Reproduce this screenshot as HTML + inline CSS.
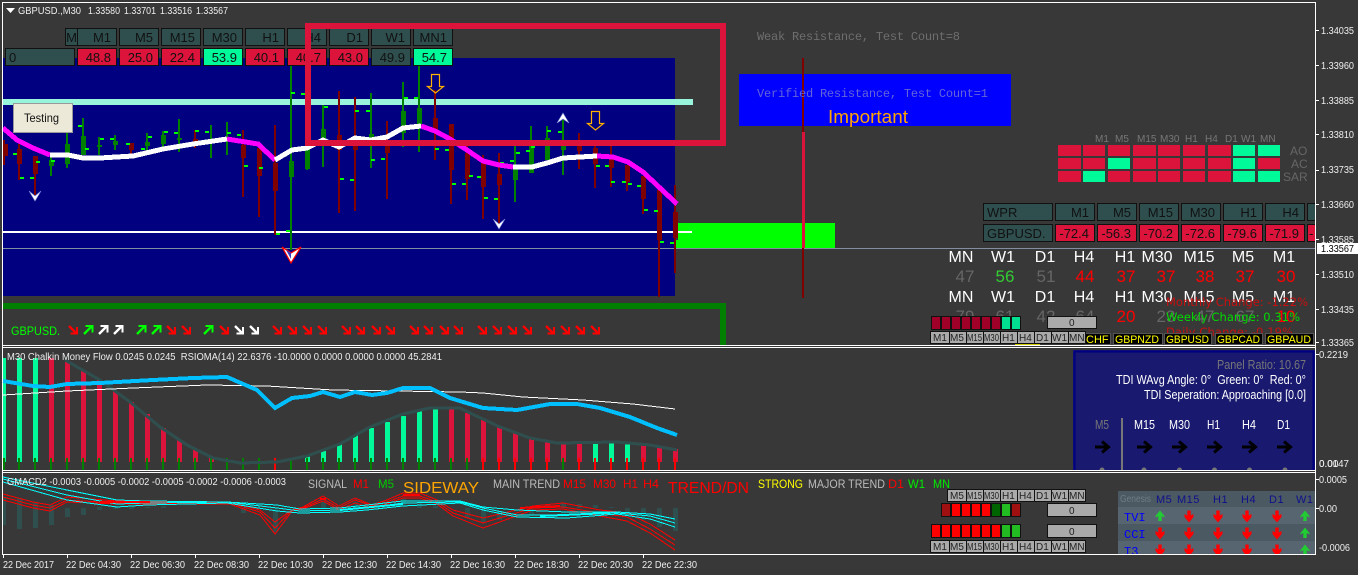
<!DOCTYPE html>
<html><head><meta charset="utf-8"><style>
html,body{margin:0;padding:0;background:#383838;width:1358px;height:575px;overflow:hidden}
svg{display:block}
text{font-family:"Liberation Sans",sans-serif;font-size:11px;fill:#e8e8e8;white-space:pre}
.ax{font-size:10px;fill:#eee}
.c{font-size:13px;fill:#111}
.m{font-family:"Liberation Mono",monospace;font-size:12px}
.b{font-size:16px;fill:#fff}
.n{font-size:17px}
.s{font-size:10px;fill:#222}
.g{font-size:10px;fill:#777}
.k{font-size:12px}
.l{font-family:"DejaVu Sans",sans-serif;font-size:11.5px}
.t{font-size:13px;fill:#fff}
</style></head><body>
<svg width="1358" height="575" viewBox="0 0 1358 575" xmlns="http://www.w3.org/2000/svg">
<defs>
<g id="se"><path d="M0 1L7.5 8.5" stroke-width="2.4" fill="none"/><path d="M8 2V8.5H1.5" stroke-width="2" fill="none"/></g>
<g id="ne"><path d="M0 9L7.5 1.5" stroke-width="2.4" fill="none"/><path d="M1.5 1H8.5V7.5" stroke-width="2" fill="none"/></g>
<path id="tdi" d="M-7 0H5M0-5.5L6.5 0L0 5.5" stroke="#000" stroke-width="3" fill="none"/>
<path id="dn" d="M-1.7-6.500H1.700V-1.500L4.500-3V0L0 5.500L-4.500 0V-3L-1.700-1.500Z"/>
<path id="up" d="M0-5.500L4.500 0V1.500L1.700 0V5H-1.700V0L-4.500 1.500V0Z"/>
<clipPath id="gc"><rect x="1118" y="491" width="197" height="63"/></clipPath>
</defs>
<rect width="1358" height="575" fill="#383838"/>
<!-- blue panel -->
<rect x="3" y="58" width="672" height="238" fill="#000080"/>
<rect x="678" y="223" width="157" height="25" fill="#00ff00"/>
<rect x="676" y="240" width="5" height="9" fill="#00ff00"/>
<rect x="739" y="74" width="272" height="52" fill="#0000ff"/>
<g shape-rendering="crispEdges">
<path d="M3 102H693" stroke="#98f5dc" stroke-width="6"/>
<path d="M3 232H692" stroke="#fff" stroke-width="2"/>
<path d="M3 248.5H1315" stroke="#8090a0" stroke-width="1"/>
<!-- wicks -->
<path fill="none" stroke="#800000" stroke-width="2" d="M4 140V165M19 144V180M35 156V195M131 143V155M195 130V148M243 130V197M259 148V217M275 125V235M339 91V213M355 97V211M387 121V199M435 90V160M451 124V204M467 146V200M483 155V219M499 153V224M579 133V169M595 146V188M611 146V187M627 165V191M643 176V214M659 190V297M675 185V273"/>
<path fill="none" stroke="#008000" stroke-width="2" d="M51 157V176M67 133V168M83 118V155M99 137V155M115 135V150M147 133V152M163 131V150M179 119V152M211 125V158M227 122V155M291 66V250M307 105V170M323 105V167M371 93V168M403 82V147M419 66V152M515 146V202M531 126V173M547 126V160M563 120V175"/>
<!-- bodies -->
<path fill="none" stroke="#800000" stroke-width="5" d="M5.500 144V156M19.500 149V164M35.500 156V174M131.500 143V150M195.500 139V143M243.500 145V158M259.500 148V176M275.500 163V191M339.500 135V150M355.500 140V150M387.500 140V153M435.500 118V130M451.500 124V170M467.500 153V179M483.500 163V187M499.500 174V185M579.500 146V151M595.500 148V164M611.500 156V168M627.500 165V182M643.500 176V199M659.500 190V240M675.500 212V238"/>
<path fill="none" stroke="#008000" stroke-width="5" d="M51.500 160V166M67.500 144V164M83.500 136V155M99.500 145V147M115.500 141V145M147.500 142V146M163.500 135V144M179.500 138V140M211.500 140V141M227.500 137V139M291.500 161V177M307.500 147V169M323.500 129V140M371.500 134V140M403.500 111V133M419.500 108V125M515.500 165V180M531.500 146V173M547.500 138V160M563.500 146V150"/>
<!-- fractal dashes -->
<path fill="none" stroke="#00ff00" stroke-width="2" d="M13 154h4M20 178h4M30 178h4M36 162h4M51 161h4M78 126h4M85 149h4M100 139h4M110 139h4M126 144h4M141 149h4M148 137h4M164 132h4M174 133h4M195 131h4M205 132h4M227 133h4M237 135h4M244 166h4M259 168h4M291 93h4M301 94h4M324 107h4M340 179h4M350 180h4M355 111h4M366 111h4M371 160h4M381 159h4M404 98h4M414 98h4M435 149h4M445 150h4M452 184h4M462 184h4M469 176h4M477 177h4M484 198h4M494 199h4M500 163h4M510 161h4M516 153h4M526 151h4M531 147h4M547 131h4M558 132h4M596 166h4M605 166h4M611 182h4M622 182h4M628 184h4M637 186h4M644 210h4M654 211h4M660 242h4M670 243h4M276 234h4M286 231h4"/>
<!-- MA line -->
<path fill="none" stroke="#ff00ff" stroke-width="5" d="M3 128L17 140L33 148L50 155M227 139L258 144L275 160M421 126L435 131L450 139L467 150L483 161L499 165L513 167M597 156L613 157L628 162L643 172L660 188L677 204"/>
<path fill="none" stroke="#fff" stroke-width="5" d="M50 155H68L83 158L100 158L133 156L163 149L193 144L227 139M275 160L292 150L307 148L323 140L339 147L355 138L371 140L387 137L403 128L421 126M513 167L532 167L547 163L563 158L580 157L597 156"/>
<!-- vertical line -->
<path d="M803 58V132M803 248V298" stroke="#800000" stroke-width="2"/>
<path d="M803.500 132V248" stroke="#dc143c" stroke-width="3"/>
<!-- green frame -->
<path d="M3 306H723V345" fill="none" stroke="#007f00" stroke-width="6"/>
</g>
<!-- chevrons -->
<path d="M29 191L35 196L41 191L35 201Z" fill="#fff" stroke="#7c8cd8" stroke-width=".6"/>
<path d="M493 219L499 224L505 219L499 229Z" fill="#fff" stroke="#7c8cd8" stroke-width=".6"/>
<path d="M282 247L291 253L301 247L291 263Z" fill="#fff" stroke="#f00" stroke-width="1.200"/>
<path d="M286 250L291 253V259Z" fill="#3a3ac0"/>
<path d="M557 123L563 119L569 123L563 113Z" fill="#fff" stroke="#7c8cd8" stroke-width=".6"/>
<path d="M431.500 74.500H439.500V86.500H443.500L435.500 93L427.500 86.500H431.500Z" fill="none" stroke="#ffb000" stroke-width="1.200"/>
<path d="M591.500 111.500H599.500V123.500H603.500L595.500 130L587.500 123.500H591.500Z" fill="none" stroke="#ffb000" stroke-width="1.200"/>
<!-- Testing -->
<rect x="13.500" y="103.500" width="59" height="29" fill="#ece9d8" stroke="#999"/>
<text x="24" y="122" style="font-size:12px;fill:#111" textLength="35" lengthAdjust="spacingAndGlyphs">Testing</text>
<!-- header table -->
<g stroke="#111" stroke-width="1" shape-rendering="crispEdges" fill="#2f4f4f">
<rect x="65.500" y="28.500" width="12" height="17"/><rect x="77.500" y="28.500" width="39" height="17"/><rect x="119.500" y="28.500" width="39" height="17"/><rect x="161.500" y="28.500" width="39" height="17"/><rect x="203.500" y="28.500" width="39" height="17"/><rect x="245.500" y="28.500" width="39" height="17"/><rect x="287.500" y="28.500" width="39" height="17"/><rect x="329.500" y="28.500" width="39" height="17"/><rect x="371.500" y="28.500" width="39" height="17"/><rect x="413.500" y="28.500" width="39" height="17"/>
<rect x="5.500" y="48.500" width="69" height="17"/><rect x="371.500" y="48.500" width="39" height="17"/>
<rect x="77.500" y="48.500" width="39" height="17" fill="#dc143c"/><rect x="119.500" y="48.500" width="39" height="17" fill="#dc143c"/><rect x="161.500" y="48.500" width="39" height="17" fill="#dc143c"/><rect x="203.500" y="48.500" width="39" height="17" fill="#00fa9a"/><rect x="245.500" y="48.500" width="39" height="17" fill="#dc143c"/><rect x="287.500" y="48.500" width="39" height="17" fill="#dc143c"/><rect x="329.500" y="48.500" width="39" height="17" fill="#dc143c"/><rect x="413.500" y="48.500" width="39" height="17" fill="#00fa9a"/>
</g>
<g class="c" text-anchor="end">
<text class="c" x="77" y="42">M</text><text class="c" x="111" y="42">M1</text><text class="c" x="153" y="42">M5</text><text class="c" x="195" y="42">M15</text><text class="c" x="237" y="42">M30</text><text class="c" x="279" y="42">H1</text><text class="c" x="321" y="42">H4</text><text class="c" x="363" y="42">D1</text><text class="c" x="405" y="42">W1</text><text class="c" x="447" y="42">MN1</text>
<text class="c" x="111" y="62">48.8</text><text class="c" x="153" y="62">25.0</text><text class="c" x="195" y="62">22.4</text><text class="c" x="237" y="62">53.9</text><text class="c" x="279" y="62">40.1</text><text class="c" x="321" y="62">40.7</text><text class="c" x="363" y="62">43.0</text><text class="c" x="405" y="62">49.9</text><text class="c" x="447" y="62">54.7</text>
</g>
<text class="c" x="9" y="62">0</text>
<!-- crimson rectangle -->
<path d="M308 26H723V143H308Z" fill="none" stroke="#dc143c" stroke-width="6" shape-rendering="crispEdges"/>
<!-- frame title -->
<path d="M6 8H15L10.500 13Z" fill="#fff"/>
<text x="18" y="14" class="ax" textLength="63" lengthAdjust="spacingAndGlyphs">GBPUSD.,M30</text>
<text x="88" y="14" class="ax" textLength="32" lengthAdjust="spacingAndGlyphs">1.33580</text><text x="124" y="14" class="ax" textLength="32" lengthAdjust="spacingAndGlyphs">1.33701</text><text x="160" y="14" class="ax" textLength="32" lengthAdjust="spacingAndGlyphs">1.33516</text><text x="196" y="14" class="ax" textLength="32" lengthAdjust="spacingAndGlyphs">1.33567</text>
<!-- resistance text -->
<text class="m" x="757" y="40" style="fill:#6e6e6e" textLength="203">Weak Resistance, Test Count=8</text>
<text class="m" x="757" y="97" style="fill:#6464d8" textLength="231">Verified Resistance, Test Count=1</text>
<text x="828" y="123" style="font-size:18px;fill:#ffa500" textLength="80" lengthAdjust="spacingAndGlyphs">Important</text>
<!-- signal grid -->
<g shape-rendering="crispEdges" fill="#dc143c">
<path d="M1058 145h23v11h-23zM1083 145h22v11h-22zM1108 145h22v11h-22zM1133 145h23v11h-23zM1158 145h22v11h-22zM1183 145h22v11h-22zM1208 145h23v11h-23zM1058 158h23v11h-23zM1083 158h22v11h-22zM1133 158h23v11h-23zM1158 158h22v11h-22zM1183 158h22v11h-22zM1208 158h23v11h-23zM1258 158h22v11h-22zM1058 171h23v11h-23zM1108 171h22v11h-22zM1133 171h23v11h-23zM1158 171h22v11h-22zM1183 171h22v11h-22zM1208 171h23v11h-23z"/>
<path fill="#00fa9a" d="M1233 145h22v11h-22zM1258 145h22v11h-22zM1108 158h22v11h-22zM1233 158h22v11h-22zM1083 171h22v11h-22zM1233 171h22v11h-22zM1258 171h22v11h-22z"/>
</g>
<g class="g">
<text class="g" x="1095" y="142">M1</text><text class="g" x="1115" y="142">M5</text><text class="g" x="1137" y="142">M15</text><text class="g" x="1160" y="142">M30</text><text class="g" x="1185" y="142">H1</text><text class="g" x="1205" y="142">H4</text><text class="g" x="1225" y="142">D1</text><text class="g" x="1241" y="142">W1</text><text class="g" x="1260" y="142">MN</text>
</g>
<text x="1290" y="155" style="font-size:12px;fill:#666">AO</text><text x="1291" y="168" style="font-size:12px;fill:#666">AC</text><text x="1283" y="181" style="font-size:12px;fill:#666">SAR</text>
<!-- WPR table -->
<svg x="0" y="0" width="1315" height="575">
<g stroke="#111" shape-rendering="crispEdges" fill="#2f4f4f">
<rect x="983.500" y="203.500" width="69" height="17"/><rect x="1055.500" y="203.500" width="39" height="17"/><rect x="1097.500" y="203.500" width="39" height="17"/><rect x="1139.500" y="203.500" width="39" height="17"/><rect x="1181.500" y="203.500" width="39" height="17"/><rect x="1223.500" y="203.500" width="39" height="17"/><rect x="1265.500" y="203.500" width="39" height="17"/><rect x="1307.500" y="203.500" width="39" height="17"/>
<rect x="983.500" y="224.500" width="69" height="17"/>
<g fill="#dc143c"><rect x="1055.500" y="224.500" width="39" height="17"/><rect x="1097.500" y="224.500" width="39" height="17"/><rect x="1139.500" y="224.500" width="39" height="17"/><rect x="1181.500" y="224.500" width="39" height="17"/><rect x="1223.500" y="224.500" width="39" height="17"/><rect x="1265.500" y="224.500" width="39" height="17"/><rect x="1307.500" y="224.500" width="39" height="17"/></g>
</g>
<text class="c" x="987" y="217">WPR</text><text class="c" x="987" y="238">GBPUSD.</text>
<g text-anchor="end">
<text class="c" x="1089" y="217">M1</text><text class="c" x="1131" y="217">M5</text><text class="c" x="1173" y="217">M15</text><text class="c" x="1215" y="217">M30</text><text class="c" x="1257" y="217">H1</text><text class="c" x="1299" y="217">H4</text>
<text class="c" x="1089" y="238">-72.4</text><text class="c" x="1131" y="238">-56.3</text><text class="c" x="1173" y="238">-70.2</text><text class="c" x="1215" y="238">-72.6</text><text class="c" x="1257" y="238">-79.6</text><text class="c" x="1299" y="238">-71.9</text>
</g>
<text class="c" x="1309" y="238">-</text>
</svg>
<!-- RSI labels -->
<g text-anchor="middle">
<text class="b" x="961" y="262">MN</text><text class="b" x="1003" y="262">W1</text><text class="b" x="1045" y="262">D1</text><text class="b" x="1084" y="262">H4</text><text class="b" x="1125" y="262">H1</text><text class="b" x="1157" y="262">M30</text><text class="b" x="1199" y="262">M15</text><text class="b" x="1243" y="262">M5</text><text class="b" x="1284" y="262">M1</text>
<text class="n" x="965" y="282" style="fill:#666">47</text><text class="n" x="1005" y="282" style="fill:#33cc33">56</text><text class="n" x="1046" y="282" style="fill:#666">51</text><text class="n" x="1085" y="282" style="fill:#f00">44</text><text class="n" x="1126" y="282" style="fill:#f00">37</text><text class="n" x="1166" y="282" style="fill:#f00">37</text><text class="n" x="1205" y="282" style="fill:#f00">38</text><text class="n" x="1245" y="282" style="fill:#f00">37</text><text class="n" x="1286" y="282" style="fill:#f00">30</text>
<text class="b" x="961" y="302">MN</text><text class="b" x="1003" y="302">W1</text><text class="b" x="1045" y="302">D1</text><text class="b" x="1084" y="302">H4</text><text class="b" x="1125" y="302">H1</text><text class="b" x="1157" y="302">M30</text><text class="b" x="1199" y="302">M15</text><text class="b" x="1243" y="302">M5</text><text class="b" x="1284" y="302">M1</text>
<text class="n" x="965" y="322" style="fill:#666">79</text><text class="n" x="1005" y="322" style="fill:#666">61</text><text class="n" x="1046" y="322" style="fill:#666">42</text><text class="n" x="1085" y="322" style="fill:#666">64</text><text class="n" x="1126" y="322" style="fill:#f00">20</text><text class="n" x="1166" y="322" style="fill:#666">23</text><text class="n" x="1205" y="322" style="fill:#666">47</text><text class="n" x="1245" y="322" style="fill:#666">67</text><text class="n" x="1286" y="322" style="fill:#f00">10</text>
</g>
<text class="l" x="1166" y="306" style="fill:#c81010" textLength="142">Monthly Change: -1.22%</text>
<text class="l" x="1166" y="321" style="fill:#00dd00" textLength="134">Weekly Change: 0.31%</text>
<text class="l" x="1166" y="336" style="fill:#c81010" textLength="127">Daily Change: -0.19%</text>
<!-- pair boxes -->
<g shape-rendering="crispEdges"><path fill="#000" stroke="#555" d="M1085.500 333.500h25v11h-25zM1113.500 333.500h49v11h-49zM1164.500 333.500h47v11h-47zM1215.500 333.500h47v11h-47zM1265.500 333.500h48v11h-48z"/></g>
<g style="font-size:11px"><text x="1086" y="343" style="fill:#ff0">CHF</text><text x="1115" y="343" style="fill:#ff0" textLength="44" lengthAdjust="spacingAndGlyphs">GBPNZD</text><text x="1166" y="343" style="fill:#ff0" textLength="43" lengthAdjust="spacingAndGlyphs">GBPUSD</text><text x="1217" y="343" style="fill:#ff0" textLength="43" lengthAdjust="spacingAndGlyphs">GBPCAD</text><text x="1267" y="343" style="fill:#ff0" textLength="44" lengthAdjust="spacingAndGlyphs">GBPAUD</text></g>
<rect x="1015" y="344" width="25" height="2" fill="#cc0"/>
<!-- bars 1 -->
<g shape-rendering="crispEdges" stroke="#111">
<path fill="#a00028" d="M931.500 316.500h9v13h-9zM941.500 316.500h9v13h-9zM951.500 316.500h9v13h-9zM961.500 316.500h9v13h-9zM971.500 316.500h9v13h-9zM981.500 316.500h9v13h-9zM991.500 316.500h9v13h-9z"/>
<path fill="#00e090" d="M1001.500 316.500h9v13h-9zM1011.500 316.500h9v13h-9z"/>
<rect x="1047.500" y="316.500" width="49" height="12" fill="#aaa"/>
<path fill="#aaa" d="M930.500 331.500h19v12h-19zM949.500 331.500h17v12h-17zM966.500 331.500h17v12h-17zM983.500 331.500h17v12h-17zM1000.500 331.500h17v12h-17zM1017.500 331.500h17v12h-17zM1034.500 331.500h17v12h-17zM1051.500 331.500h17v12h-17zM1068.500 331.500h17v12h-17z"/>
</g>
<text class="s" x="1069" y="326">0</text>
<g><text class="s" x="933" y="341">M1</text><text class="s" x="950" y="341">M5</text><text class="s" x="967" y="341" textLength="15" lengthAdjust="spacingAndGlyphs">M15</text><text class="s" x="984" y="341" textLength="15" lengthAdjust="spacingAndGlyphs">M30</text><text class="s" x="1002" y="341">H1</text><text class="s" x="1019" y="341">H4</text><text class="s" x="1036" y="341">D1</text><text class="s" x="1052" y="341">W1</text><text class="s" x="1069" y="341">MN</text></g>
<!-- arrows row -->
<text x="11" y="335" style="font-size:12px;fill:#00ff00" textLength="49" lengthAdjust="spacingAndGlyphs">GBPUSD.</text>
<g stroke="#f00">
<use href="#se" x="69" y="325"/><use href="#se" x="167" y="325"/><use href="#se" x="182" y="325"/><use href="#se" x="220" y="325"/><use href="#se" x="273" y="325"/><use href="#se" x="288" y="325"/><use href="#se" x="303" y="325"/><use href="#se" x="318" y="325"/><use href="#se" x="342" y="325"/><use href="#se" x="356" y="325"/><use href="#se" x="372" y="325"/><use href="#se" x="386" y="325"/><use href="#se" x="410" y="325"/><use href="#se" x="424" y="325"/><use href="#se" x="440" y="325"/><use href="#se" x="454" y="325"/><use href="#se" x="478" y="325"/><use href="#se" x="493" y="325"/><use href="#se" x="508" y="325"/><use href="#se" x="523" y="325"/><use href="#se" x="546" y="325"/><use href="#se" x="561" y="325"/><use href="#se" x="576" y="325"/><use href="#se" x="591" y="325"/>
</g>
<g stroke="#0f0"><use href="#ne" x="84" y="325"/><use href="#ne" x="137" y="325"/><use href="#ne" x="152" y="325"/><use href="#ne" x="204" y="325"/></g>
<g stroke="#fff"><use href="#ne" x="99" y="325"/><use href="#ne" x="114" y="325"/><use href="#se" x="235" y="325"/><use href="#se" x="250" y="325"/></g>
<!-- frame lines -->
<g shape-rendering="crispEdges" stroke="#fff" fill="none">
<path d="M2.500 2.500H1315.500V554.500H2.500Z"/>
<path d="M2 345.500H1316M2 347.500H1316M2 470.500H1316M2 472.500H1316"/>
<path d="M1315 30.500h4M1315 65.500h4M1315 100.500h4M1315 134.500h4M1315 170.500h4M1315 204.500h4M1315 239.500h4M1315 274.500h4M1315 309.500h4M1315 342.500h4M1315 354.500h4M1315 508.500h4M1315 479.500h4M3.500 555v3M67.500 555v3M131.500 555v3M195.500 555v3M259.500 555v3M323.500 555v3M387.500 555v3M451.500 555v3M515.500 555v3M579.500 555v3M643.500 555v3"/>
</g>
<!-- axis -->
<g class="ax">
<text class="ax" x="1321" y="34" textLength="33" lengthAdjust="spacingAndGlyphs">1.34035</text><text class="ax" x="1321" y="69" textLength="33" lengthAdjust="spacingAndGlyphs">1.33960</text><text class="ax" x="1321" y="104" textLength="33" lengthAdjust="spacingAndGlyphs">1.33885</text><text class="ax" x="1321" y="138" textLength="33" lengthAdjust="spacingAndGlyphs">1.33810</text><text class="ax" x="1321" y="173" textLength="33" lengthAdjust="spacingAndGlyphs">1.33735</text><text class="ax" x="1321" y="208" textLength="33" lengthAdjust="spacingAndGlyphs">1.33660</text><text class="ax" x="1321" y="243" textLength="33" lengthAdjust="spacingAndGlyphs">1.33585</text><text class="ax" x="1321" y="278" textLength="33" lengthAdjust="spacingAndGlyphs">1.33510</text><text class="ax" x="1321" y="313" textLength="33" lengthAdjust="spacingAndGlyphs">1.33435</text><text class="ax" x="1321" y="346" textLength="33" lengthAdjust="spacingAndGlyphs">1.33365</text>
</g>
<rect x="1317" y="243" width="41" height="11" fill="#fff"/>
<text class="ax" x="1321" y="252" style="fill:#000" textLength="33" lengthAdjust="spacingAndGlyphs">1.33567</text>
<text class="ax" x="1319" y="358" textLength="29" lengthAdjust="spacingAndGlyphs">0.2219</text>
<text class="ax" x="1319" y="467" textLength="30" lengthAdjust="spacingAndGlyphs">0.0147</text><text class="ax" x="1319" y="467">0.00</text>
<text class="ax" x="1319" y="483" textLength="28" lengthAdjust="spacingAndGlyphs">0.0005</text>
<text class="ax" x="1319" y="512" textLength="18" lengthAdjust="spacingAndGlyphs">0.00</text>
<text class="ax" x="1319" y="551" textLength="31" lengthAdjust="spacingAndGlyphs">-0.0006</text>
<!-- panel 2 histogram -->
<g shape-rendering="crispEdges">
<path fill="none" stroke="#00fa9a" stroke-width="3" d="M4.500 358V462"/>
<path fill="none" stroke="#00fa9a" stroke-width="5" d="M19.500 358V462M35.500 358V462M307.500 456V462M323.500 451V462M339.500 444V462M355.500 435V462M371.500 428V462M387.500 422V462M403.500 416V462M419.500 410V462M435.500 409V462M595.500 444V462M611.500 443V462M627.500 443V462"/>
<path fill="none" stroke="#dc143c" stroke-width="5" d="M51.500 358V462M67.500 362V462M83.500 371V462M99.500 380V462M115.500 391V462M131.500 402V462M147.500 414V462M163.500 428V462M179.500 440V462M195.500 450V462M211.500 458V462M243.500 462V463M451.500 409V462M467.500 413V462M483.500 420V462M499.500 427V462M515.500 433V462M531.500 439V462M547.500 442V462M563.500 444V462M579.500 444V462M643.500 445V462M659.500 447V462M675.500 449V462"/>
<path fill="none" stroke="#007f00" stroke-width="2" d="M4 458V470M19 458V470M35 458V470M51 458V470M67 458V470M83 458V470M99 458V470M115 458V470M131 458V470M147 458V470M163 458V470M179 458V470M195 458V470M211 458V470M227 458V470M243 458V470M259 458V470M291 458V470M307 458V470M323 458V470M339 458V470M355 458V470M371 458V470M387 458V470M403 458V470M419 458V470M435 458V470M451 458V470M467 458V470M563 458V470"/>
<path fill="none" stroke="#f00" stroke-width="2" d="M275 458V470M483 458V470M499 458V470M515 458V470M531 458V470M547 458V470M579 458V470M595 458V470M611 458V470M627 458V470M643 458V470M659 458V470M675 458V470"/>
<path fill="none" stroke="#2f4f4f" stroke-width="3" d="M65 360L100 380L130 402L160 427L187 445L213 458L240 463L277 462L307 456L340 444L370 427L403 414L430 408L460 408L470 413L500 427L530 438L557 443L617 442L650 445L677 450"/>
<path fill="none" stroke="#fff" stroke-width="1" d="M3 395L67 391L133 388L207 385L267 386L333 390L460 392L483 393L523 397L583 400L633 404L675 409"/>
<path fill="none" stroke="#00bfff" stroke-width="4" d="M3 381L33 386L50 387L67 384L100 383L153 380L193 378L227 377L257 390L275 408L292 398L310 396L323 392L340 397L355 392L372 395L387 393L403 388L430 388L450 398L483 408L517 410L550 404L577 404L600 408L630 417L657 428L677 435"/>
</g>
<text x="7" y="360" textLength="435" lengthAdjust="spacingAndGlyphs" class="ax">M30 Chalkin Money Flow 0.0245 0.0245  RSIOMA(14) 22.6376 -10.0000 0.0000 0.0000 0.0000 45.2841</text>
<!-- TDI panel -->
<rect x="1073" y="350" width="242" height="120" fill="#191970"/>
<path d="M1074 351.500H1313.500V470M1074.500 351V470" fill="none" stroke="#000080" stroke-width="2"/>
<text x="1217" y="369" style="fill:#777;font-size:13px" textLength="89" lengthAdjust="spacingAndGlyphs">Panel Ratio: 10.67</text>
<text x="1116" y="384" class="t" textLength="190" lengthAdjust="spacingAndGlyphs">TDI WAvg Angle: 0°  Green: 0°  Red: 0°</text>
<text x="1144" y="399" class="t" textLength="162" lengthAdjust="spacingAndGlyphs">TDI Seperation: Approaching [0.0]</text>
<text x="1095" y="429" style="fill:#777;font-size:13px" textLength="14" lengthAdjust="spacingAndGlyphs">M5</text><text x="1134" y="429" class="t" textLength="21" lengthAdjust="spacingAndGlyphs">M15</text><text x="1169" y="429" class="t" textLength="21" lengthAdjust="spacingAndGlyphs">M30</text><text x="1207" y="429" class="t" textLength="13" lengthAdjust="spacingAndGlyphs">H1</text><text x="1242" y="429" class="t" textLength="14" lengthAdjust="spacingAndGlyphs">H4</text><text x="1277" y="429" class="t" textLength="13" lengthAdjust="spacingAndGlyphs">D1</text>
<rect x="1121" y="418" width="2" height="52" fill="#777"/>
<use href="#tdi" x="1102" y="447"/><use href="#tdi" x="1144" y="447"/><use href="#tdi" x="1179" y="447"/><use href="#tdi" x="1214" y="447"/><use href="#tdi" x="1249" y="447"/><use href="#tdi" x="1284" y="447"/>
<g fill="#777"><path d="M1099.500 470a2.500 2.500 0 0 1 5 0zM1141.500 470a2.500 2.500 0 0 1 5 0zM1177 470a2.500 2.500 0 0 1 5 0zM1212 470a2.500 2.500 0 0 1 5 0zM1247 470a2.500 2.500 0 0 1 5 0zM1282.500 470a2.500 2.500 0 0 1 5 0z"/></g>
<!-- panel 3 -->
<g shape-rendering="crispEdges" fill="none">
<path stroke="#2f4f4f" stroke-width="3" d="M4.500 498V525"/>
<path stroke="#2f4f4f" stroke-width="5" d="M19.500 498V529M35.500 502V528M51.500 505V525M67.500 508V517M83.500 508V515M99.500 507V510M115.500 507V509M131.500 507V509M147.500 507V508M163.500 506V508M243.500 508V513M275.500 508V532M323.500 502V508M355.500 502V508M403.500 498V505M419.500 502V508M435.500 506V508M467.500 508V518M483.500 508V522M499.500 511V520M531.500 508V515M547.500 505V508M563.500 503V508M579.500 504V508M595.500 505V508M611.500 507V508M627.500 508V515M643.500 508V520M659.500 508V527M675.500 508V531"/>
<g stroke="#f00" stroke-width="1">
<path d="M3 494L33 502L50 505L67 497L117 501L150 502L230 502L260 510L275 522L292 510L303 507L323 496L339 506L355 498L372 505L387 500L403 493L420 493L437 500L453 510L483 518L533 506L563 503L600 510L627 513L650 524L675 540"/>
<path d="M3 497L33 505L50 508L67 500L117 503L150 503L230 503L260 512L275 528L292 510L303 508L323 499L339 508L355 500L372 506L387 502L403 496L420 496L437 502L453 513L483 523L533 508L563 507L600 513L627 517L650 529L675 545"/>
<path d="M3 500L33 508L50 511L67 502L117 504L150 504L230 504L260 515L275 534L292 511L303 509L323 501L339 510L355 503L372 508L387 504L403 498L420 498L437 504L453 516L483 528L533 510L563 509L600 516L627 521L650 533L675 550"/>
</g>
<g stroke="#00ffff" stroke-width="1">
<path d="M3 477L67 490L117 500L147 501L227 502L277 505L300 509L340 508L367 505L403 501L460 501L483 507L517 510L567 512L617 512L650 514L675 519"/>
<path d="M3 479L67 495L117 504L147 503L227 502L277 508L300 511L340 510L367 508L403 503L460 502L483 508L517 515L567 515L617 513L650 516L675 523"/>
<path d="M3 482L67 500L117 507L147 505L227 503L277 511L300 513L340 512L367 510L403 506L460 503L483 510L517 517L567 518L617 514L650 519L675 527"/>
</g>
<path stroke="#00ffff" stroke-width="2" d="M340 510L403 504M540 516L610 513"/>
<path stroke="#f00" stroke-width="2" d="M100 502L150 502M320 499L326 499M403 495L420 495M520 508L560 506"/>
</g>
<text x="7" y="485" textLength="279" lengthAdjust="spacingAndGlyphs" class="ax">GMACD2 -0.0003 -0.0005 -0.0002 -0.0005 -0.0002 -0.0006 -0.0003</text>
<g class="k">
<text class="k" x="308" y="488" style="fill:#bbb" textLength="39" lengthAdjust="spacingAndGlyphs">SIGNAL</text>
<text class="k" x="353" y="488" style="fill:#f00" textLength="16" lengthAdjust="spacingAndGlyphs">M1</text>
<text class="k" x="378" y="488" style="fill:#0c0" textLength="16" lengthAdjust="spacingAndGlyphs">M5</text>
<text x="403" y="493" style="font-size:16px;fill:#ffa500" textLength="76" lengthAdjust="spacingAndGlyphs">SIDEWAY</text>
<text class="k" x="493" y="488" style="fill:#bbb" textLength="67" lengthAdjust="spacingAndGlyphs">MAIN TREND</text>
<text class="k" x="563" y="488" style="fill:#f00" textLength="23" lengthAdjust="spacingAndGlyphs">M15</text>
<text class="k" x="593" y="488" style="fill:#f00" textLength="23" lengthAdjust="spacingAndGlyphs">M30</text>
<text class="k" x="623" y="488" style="fill:#f00" textLength="15" lengthAdjust="spacingAndGlyphs">H1</text>
<text class="k" x="643" y="488" style="fill:#f00" textLength="16" lengthAdjust="spacingAndGlyphs">H4</text>
<text x="668" y="493" style="font-size:16px;fill:#f00" textLength="81" lengthAdjust="spacingAndGlyphs">TREND/DN</text>
<text class="k" x="758" y="488" style="fill:#ff0" textLength="45" lengthAdjust="spacingAndGlyphs">STRONG</text>
<text class="k" x="808" y="488" style="fill:#bbb" textLength="77" lengthAdjust="spacingAndGlyphs">MAJOR TREND</text>
<text class="k" x="888" y="488" style="fill:#f00" textLength="16" lengthAdjust="spacingAndGlyphs">D1</text>
<text class="k" x="908" y="488" style="fill:#0e0" textLength="17" lengthAdjust="spacingAndGlyphs">W1</text>
<text class="k" x="933" y="488" style="fill:#0e0" textLength="17" lengthAdjust="spacingAndGlyphs">MN</text>
</g>
<!-- bars 2 -->
<g shape-rendering="crispEdges" stroke="#111">
<path fill="#aaa" d="M947.500 489.500h19v12h-19zM966.500 489.500h17v12h-17zM983.500 489.500h17v12h-17zM1000.500 489.500h17v12h-17zM1017.500 489.500h17v12h-17zM1034.500 489.500h17v12h-17zM1051.500 489.500h17v12h-17zM1068.500 489.500h17v12h-17z"/>
<path fill="#a01010" d="M941.500 503.500h9v13h-9zM1011.500 503.500h9v13h-9z"/>
<path fill="#f00" d="M951.500 503.500h9v13h-9zM961.500 503.500h9v13h-9zM971.500 503.500h9v13h-9zM981.500 503.500h9v13h-9zM931.500 524.500h9v13h-9zM941.500 524.500h9v13h-9zM951.500 524.500h9v13h-9zM961.500 524.500h9v13h-9zM971.500 524.500h9v13h-9zM981.500 524.500h9v13h-9zM991.500 524.500h9v13h-9z"/>
<path fill="#006400" d="M991.500 503.500h9v13h-9z"/>
<path fill="#22bb22" d="M1001.500 503.500h9v13h-9zM1001.500 524.500h9v13h-9zM1011.500 524.500h9v13h-9z"/>
<rect x="1047.500" y="503.500" width="49" height="13" fill="#aaa"/><rect x="1047.500" y="524.500" width="49" height="13" fill="#aaa"/>
<path fill="#aaa" d="M930.500 540.500h19v12h-19zM949.500 540.500h17v12h-17zM966.500 540.500h17v12h-17zM983.500 540.500h17v12h-17zM1000.500 540.500h17v12h-17zM1017.500 540.500h17v12h-17zM1034.500 540.500h17v12h-17zM1051.500 540.500h17v12h-17zM1068.500 540.500h17v12h-17z"/>
</g>
<text class="s" x="1069" y="514">0</text><text class="s" x="1069" y="535">0</text>
<g><text class="s" x="950" y="499">M5</text><text class="s" x="967" y="499" textLength="15" lengthAdjust="spacingAndGlyphs">M15</text><text class="s" x="984" y="499" textLength="15" lengthAdjust="spacingAndGlyphs">M30</text><text class="s" x="1002" y="499">H1</text><text class="s" x="1019" y="499">H4</text><text class="s" x="1036" y="499">D1</text><text class="s" x="1052" y="499">W1</text><text class="s" x="1069" y="499">MN</text>
<text class="s" x="933" y="550">M1</text><text class="s" x="950" y="550">M5</text><text class="s" x="967" y="550" textLength="15" lengthAdjust="spacingAndGlyphs">M15</text><text class="s" x="984" y="550" textLength="15" lengthAdjust="spacingAndGlyphs">M30</text><text class="s" x="1002" y="550">H1</text><text class="s" x="1019" y="550">H4</text><text class="s" x="1036" y="550">D1</text><text class="s" x="1052" y="550">W1</text><text class="s" x="1069" y="550">MN</text></g>
<!-- Genesis -->
<g clip-path="url(#gc)">
<rect x="1118" y="491" width="197" height="63" fill="#4b5963"/>
<rect x="1118" y="507" width="197" height="17" fill="#56656f"/>
<rect x="1118" y="541" width="197" height="14" fill="#56656f"/>
<text x="1120" y="502" style="font-size:10px;fill:#6e7c86" textLength="31" lengthAdjust="spacingAndGlyphs">Genesis</text>
<g style="font-size:11px;letter-spacing:.5px">
<text x="1156" y="503" style="fill:#10108a">M5</text><text x="1177" y="503" style="fill:#10108a">M15</text><text x="1213" y="503" style="fill:#10108a">H1</text><text x="1241" y="503" style="fill:#10108a">H4</text><text x="1269" y="503" style="fill:#10108a">D1</text><text x="1296" y="503" style="fill:#10108a">W1</text>
</g>
<g class="m"><text class="m" x="1124" y="521" style="fill:#0000ff">TVI</text><text class="m" x="1124" y="538" style="fill:#0000ff">CCI</text><text class="m" x="1124" y="555" style="fill:#0000ff">T3</text></g>
<g fill="#f00"><use href="#dn" x="1189" y="517"/><use href="#dn" x="1218" y="517"/><use href="#dn" x="1247" y="517"/><use href="#dn" x="1277" y="517"/><use href="#dn" x="1160" y="534"/><use href="#dn" x="1189" y="534"/><use href="#dn" x="1218" y="534"/><use href="#dn" x="1247" y="534"/><use href="#dn" x="1277" y="534"/><use href="#dn" x="1160" y="551"/><use href="#dn" x="1189" y="551"/><use href="#dn" x="1218" y="551"/><use href="#dn" x="1247" y="551"/><use href="#dn" x="1277" y="551"/></g>
<g fill="#22cc33"><use href="#up" x="1160" y="516"/><use href="#up" x="1305" y="516"/><use href="#up" x="1305" y="533"/><use href="#up" x="1305" y="550"/></g>
</g>
<path d="M1118 554.500H1316" stroke="#fff" shape-rendering="crispEdges"/>
<!-- time axis -->
<text class="ax" x="3" y="568" textLength="51" lengthAdjust="spacingAndGlyphs">22 Dec 2017</text>
<text class="ax" x="66" y="568" textLength="55" lengthAdjust="spacingAndGlyphs">22 Dec 04:30</text>
<text class="ax" x="130" y="568" textLength="55" lengthAdjust="spacingAndGlyphs">22 Dec 06:30</text>
<text class="ax" x="194" y="568" textLength="55" lengthAdjust="spacingAndGlyphs">22 Dec 08:30</text>
<text class="ax" x="258" y="568" textLength="55" lengthAdjust="spacingAndGlyphs">22 Dec 10:30</text>
<text class="ax" x="322" y="568" textLength="55" lengthAdjust="spacingAndGlyphs">22 Dec 12:30</text>
<text class="ax" x="386" y="568" textLength="55" lengthAdjust="spacingAndGlyphs">22 Dec 14:30</text>
<text class="ax" x="450" y="568" textLength="55" lengthAdjust="spacingAndGlyphs">22 Dec 16:30</text>
<text class="ax" x="514" y="568" textLength="55" lengthAdjust="spacingAndGlyphs">22 Dec 18:30</text>
<text class="ax" x="578" y="568" textLength="55" lengthAdjust="spacingAndGlyphs">22 Dec 20:30</text>
<text class="ax" x="642" y="568" textLength="55" lengthAdjust="spacingAndGlyphs">22 Dec 22:30</text>
</svg>
</body></html>
